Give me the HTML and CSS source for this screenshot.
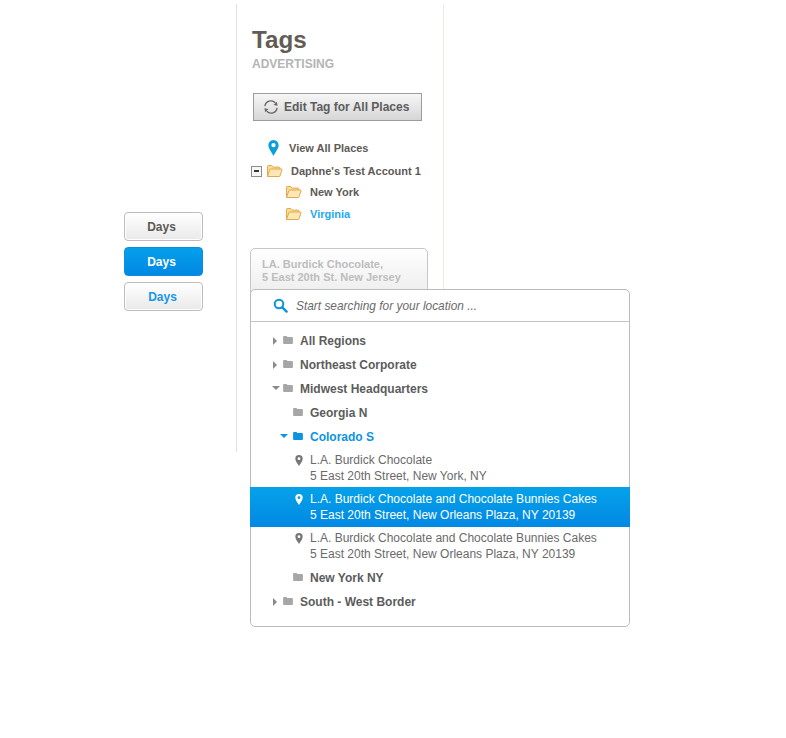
FILE: index.html
```html
<!DOCTYPE html>
<html lang="en">
<head>
<meta charset="utf-8">
<title>Tags</title>
<link rel="stylesheet" href="styles.css">
</head>
<body>
<svg class="defs" width="0" height="0" aria-hidden="true">
  <defs>
    <symbol id="open-folder" viewBox="0 0 17 14">
      <path d="M1.500 12.500V2.200c0-.4.3-.7.7-.7h3.600l1.400 1.600h6c.4 0 .7.3.7.7v1.700" fill="#fbdd98" stroke="#e0a850"/>
      <path d="M1.500 12.500l2.400-7c.1-.3.4-.5.7-.5h10.900c.4 0 .6.3.5.7l-2 6.200c-.1.4-.4.6-.8.6z" fill="#fde8b4" stroke="#e0a850"/>
    </symbol>
    <symbol id="folder" viewBox="0 0 11 9">
      <path d="M0 1.200C0 .5.500 0 1.200 0h2.600l1 1.200h5c.7 0 1.200.5 1.200 1.200v5.400c0 .7-.5 1.200-1.200 1.200H1.200C.5 9 0 8.500 0 7.800z"/>
    </symbol>
    <symbol id="pin" viewBox="0 0 8 11">
      <path fill-rule="evenodd" d="M4 0a3.700 3.700 0 0 1 3.700 3.700C7.700 6 5.300 8.800 4 11 2.700 8.800.3 6 .3 3.700A3.700 3.700 0 0 1 4 0zm0 2.300a1.400 1.400 0 1 0 0 2.800 1.400 1.400 0 0 0 0-2.800z"/>
    </symbol>
  </defs>
</svg>
<main class="page">
  <div class="buttons">
    <button class="day day-default">Days</button>
    <button class="day day-active">Days</button>
    <button class="day day-link">Days</button>
  </div>
  <aside class="panel">
    <h1 class="title">Tags</h1>
    <p class="subtitle">ADVERTISING</p>
    <button class="edit-tag">
      <svg class="refresh" width="16" height="16" viewBox="0 0 16 16" fill="none" stroke="#666" stroke-width="1.300">
        <path d="M1.900 7.200A6.100 6.100 0 0 1 12.300 3.700"/>
        <path d="M14.100 8.800A6.100 6.100 0 0 1 3.700 12.300"/>
        <path d="M14.600 6.800l-4-.8 3.200-3.200z" fill="#666" stroke="none"/>
        <path d="M1.400 9.200l4 .8-3.200 3.200z" fill="#666" stroke="none"/>
      </svg>
      Edit Tag for All Places
    </button>
    <nav class="tree">
      <a class="tree-all">
        <svg class="tree-pin" width="11" height="16" viewBox="0 0 12 18">
          <path fill-rule="evenodd" fill="#0a9fd8" d="M6 0a5.800 5.800 0 0 1 5.800 5.800C11.800 9.500 8 13.500 6 18 4 13.500.2 9.500.2 5.800A5.800 5.800 0 0 1 6 0zm0 3.400a2.400 2.400 0 1 0 0 4.800 2.400 2.400 0 0 0 0-4.800z"/>
        </svg>
        View All Places
      </a>
      <div class="tree-row tree-account">
        <span class="collapse"></span>
        <svg class="tree-folder"><use href="#open-folder"/></svg>
        Daphne's Test Account 1
      </div>
      <div class="tree-row tree-child">
        <svg class="tree-folder"><use href="#open-folder"/></svg>
        New York
      </div>
      <div class="tree-row tree-child tree-current">
        <svg class="tree-folder"><use href="#open-folder"/></svg>
        Virginia
      </div>
    </nav>
    <div class="picker">LA. Burdick Chocolate,<br>5 East 20th St. New Jersey</div>
  </aside>
  <section class="dropdown">
    <div class="search">
      <svg class="search-icon" width="15" height="15" viewBox="0 0 15 15" fill="none" stroke="#0a94dc">
        <circle cx="6" cy="6" r="4.300" stroke-width="2"/>
        <path d="M9.300 9.300l4.300 4.300" stroke-width="2.400" stroke-linecap="round"/>
      </svg>
      <span>Start searching for your location ...</span>
    </div>
    <ul class="list">
      <li class="row"><i class="caret caret-right"></i><svg class="folder"><use href="#folder"/></svg>All Regions</li>
      <li class="row"><i class="caret caret-right"></i><svg class="folder"><use href="#folder"/></svg>Northeast Corporate</li>
      <li class="row"><i class="caret caret-down"></i><svg class="folder"><use href="#folder"/></svg>Midwest Headquarters</li>
      <li class="row row-sub"><svg class="folder"><use href="#folder"/></svg>Georgia N</li>
      <li class="row row-sub row-open"><i class="caret caret-down"></i><svg class="folder"><use href="#folder"/></svg>Colorado S</li>
      <li class="place place-first"><svg class="pin"><use href="#pin"/></svg><span>L.A. Burdick Chocolate<br>5 East 20th Street, New York, NY</span></li>
      <li class="place place-selected"><svg class="pin"><use href="#pin"/></svg><span>L.A. Burdick Chocolate and Chocolate Bunnies Cakes<br>5 East 20th Street, New Orleans Plaza, NY 20139</span></li>
      <li class="place place-last"><svg class="pin"><use href="#pin"/></svg><span>L.A. Burdick Chocolate and Chocolate Bunnies Cakes<br>5 East 20th Street, New Orleans Plaza, NY 20139</span></li>
      <li class="row row-sub"><svg class="folder"><use href="#folder"/></svg>New York NY</li>
      <li class="row"><i class="caret caret-right"></i><svg class="folder"><use href="#folder"/></svg>South - West Border</li>
    </ul>
  </section>
</main>
</body>
</html>
```
FILE: styles.css
```css
* { box-sizing: border-box; }
html, body { margin: 0; background: #fff; }
body { font-family: "Liberation Sans", Arial, sans-serif; color: #5c5c5c; }
.defs { position: absolute; }
.page { position: relative; display: flex; align-items: flex-start; width: 786px; height: 738px; padding: 4px 0 0 124px; overflow: hidden; }

.buttons { display: flex; flex-direction: column; gap: 6px; margin-top: 208px; width: 79px; }
.day { height: 29px; width: 79px; padding: 0 4px 0 0; border-radius: 4px; border: 1px solid #bdbdbd; font: bold 12px "Liberation Sans", Arial, sans-serif; background: linear-gradient(#fff, #e9e9e9); box-shadow: inset 0 0 0 1px #fff; }
.day-default { color: #5a5a55; }
.day-active { color: #fff; border-color: #0a8fe0; background: linear-gradient(#04a0ea, #0288e4); box-shadow: none; }
.day-link { padding: 0 2px 0 0; color: #1a96e6; }

.panel { width: 208px; height: 448px; margin-left: 33px; padding: 22px 0 0 14px; border-left: 1px solid #e2e2de; border-right: 1px solid #ecebdc; flex: none; }
.title { margin: 0 0 0 1px; font-size: 24.200px; line-height: 28px; font-weight: bold; color: #645c54; }
.subtitle { margin: 3px 0 0 1px; font-size: 12px; line-height: 14px; font-weight: bold; color: #b4b4b4; }
.edit-tag { display: flex; align-items: center; gap: 5px; width: 169px; height: 28px; margin: 22px 0 0 2px; padding: 0 0 0 9px; border: 1px solid #9c9c9c; background: linear-gradient(#f6f6f6, #d6d6d6); font: bold 12px "Liberation Sans", Arial, sans-serif; color: #5c5c5c; white-space: nowrap; }
.refresh { flex: none; }

.tree { margin-top: 17px; font-size: 11px; font-weight: bold; color: #5e5a55; }
.tree-all { display: flex; align-items: center; gap: 10px; height: 20px; padding-left: 17px; }
.tree-pin { flex: none; }
.tree-row { display: flex; align-items: center; height: 22px; }
.tree-account { margin-top: 3px; height: 20px; }
.collapse { position: relative; width: 11px; height: 11px; margin-right: 4px; border: 1px solid #8c8c8c; background: #f6f6f6; }
.collapse::after { content: ""; position: absolute; left: 2px; top: 3px; width: 5px; height: 2px; background: #333; }
.tree-folder { width: 17px; height: 14px; margin-right: 8px; flex: none; }
.tree-child { padding-left: 34px; }
.tree-current { color: #1eaaf0; }

.picker { width: 178px; height: 60px; margin: 23px 0 0 -1px; padding: 9px 0 0 11px; border: 1px solid #c6c6c6; border-radius: 5px 5px 0 0; background: linear-gradient(#fff, #e8e8e8); font-size: 11px; line-height: 13px; font-weight: bold; color: #bdbdbd; }

.dropdown { position: absolute; left: 250px; top: 289px; width: 380px; height: 338px; border: 1px solid #bcbcbc; border-radius: 5px; background: #fff; }
.search { display: flex; align-items: center; gap: 8px; height: 32px; padding-left: 22px; border-bottom: 1px solid #c4c4c4; font-size: 11.900px; font-style: italic; color: #6a6a6a; }
.search-icon { flex: none; }
.list { margin: 0; padding: 7px 0 0; list-style: none; }
.row { position: relative; display: flex; align-items: center; height: 24px; padding-left: 32px; font-size: 12px; font-weight: bold; color: #5c5c5c; }
.row-sub { padding-left: 42px; }
.row-open { color: #0a94e4; }
.folder { width: 10px; height: 8px; margin: 0 7px 2px 0; fill: #a6a6a6; flex: none; }
.row-open .folder { fill: #0a94e4; }
.caret { position: absolute; width: 0; height: 0; border-style: solid; border-color: transparent; }
.caret-right { left: 22px; top: 8px; border-width: 4px 0 4px 4px; border-left-color: #8a8a8a; }
.caret-down { left: 21px; top: 9px; border-width: 4px 4px 0; border-top-color: #8a8a8a; }
.row-open .caret-down { left: 29px; border-top-color: #0a94e4; }
.place { display: flex; align-items: center; padding-left: 44px; font-size: 12px; line-height: 16px; color: #6a6a6a; }
.place-first { height: 38px; }
.place-selected { height: 40px; margin: 0 -1px; padding-left: 45px; color: #fff; background: linear-gradient(#05a2e9, #0288e4); }
.place-last { height: 39px; padding-bottom: 1px; }
.pin { width: 8px; height: 11px; margin: 0 7px 16px 0; fill: #777; flex: none; }
.place-selected .pin { fill: #fff; }
```
